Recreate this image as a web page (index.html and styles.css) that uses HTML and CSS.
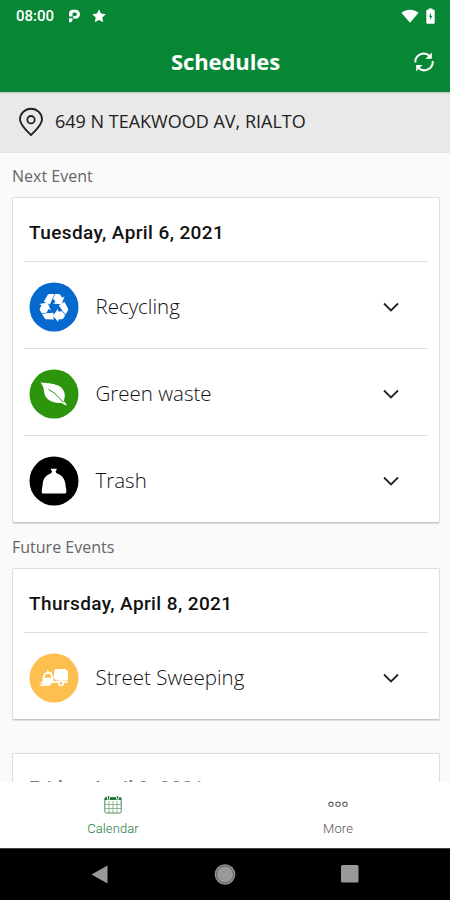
FILE: index.html
```html
<!DOCTYPE html>
<html lang="en">
<head>
<meta charset="utf-8">
<title>Schedules</title>
<link rel="stylesheet" href="styles.css">
</head>
<body>
<svg class="defs" width="0" height="0">
  <symbol id="chevron" viewBox="0 0 18 12"><path d="M2 2.500l7 7 7-7" fill="none" stroke="#222" stroke-width="1.8"/></symbol>
</svg>
<div class="app">
  <header class="top">
    <div class="status">
      <span class="clock">08:00</span>
      <svg class="parking" width="13" height="14" viewBox="0 0 13 14"><path d="M1 13.300V9.200H4.500V11.500L3 13.300zM1 7.500V4.500Q1 .7 5 .7H7.500A4.500 4.500 0 0 1 7.500 9.700H5.200V7H7.200A1.700 1.700 0 0 0 7.200 3.600H6Q4.500 3.600 4.500 5V7.500z" fill="#fff"/></svg>
      <svg class="star" width="14" height="14" viewBox="0 0 14 14"><path d="M7 .3l2 4.300 4.800.6-3.500 3.300.9 4.800L7 11l-4.200 2.300.9-4.800L.2 5.200 5 4.600z" fill="#fff"/></svg>
      <svg class="wifi" width="18" height="14" viewBox="0 0 18 14"><path d="M.4 3.700C5.500-.3 12.500-.3 17.600 3.700L9 13.700z" fill="#fff"/></svg>
      <svg class="battery" width="9" height="16" viewBox="0 0 9 16"><path d="M2.500 1.700V.5h4v1.200h1.200q1 0 1 1v12q0 1-1 1H1.300q-1 0-1-1v-12q0-1 1-1z" fill="#fff"/><path d="M5 4.500L3 9h1.300v3.200L6.200 8H5z" fill="#078636"/></svg>
    </div>
    <div class="titlebar">
      <h1>Schedules</h1>
      <svg class="refresh" width="22" height="22" viewBox="0 0 22 22"><g fill="none" stroke="#fff" stroke-width="2"><path d="M2.300 11.500A8.500 8.500 0 0 1 16.500 4.800"/><path d="M19.700 10A8.500 8.500 0 0 1 5.500 17"/></g><path d="M18.800 1.500v6.300h-6.300zM3.200 20.300V14h6.300z" fill="#fff"/></svg>
    </div>
  </header>
  <div class="address">
    <svg width="26" height="30" viewBox="0 0 26 30"><path d="M13 28C9.500 24.500 2 18 2 12.500a11 10.800 0 0 1 22 0C24 18 16.500 24.500 13 28z" fill="none" stroke="#222" stroke-width="1.900"/><circle cx="13" cy="12.700" r="3.700" fill="none" stroke="#222" stroke-width="1.800"/></svg>
    <span>649 N TEAKWOOD AV, RIALTO</span>
  </div>
  <main class="content">
    <h2 class="next">Next Event</h2>
    <section class="card">
      <h3>Tuesday, April 6, 2021</h3>
      <div class="row">
        <svg class="badge" viewBox="-25 -25 50 50"><circle r="24.500" fill="#0569cd"/>
          <g fill="#fff" transform="translate(0 .5) scale(.97)">
            <g id="arm"><path d="M-10.500-6.300L-6.200-13.300Q-5.700-14-4.500-14H.6L-4.300-3.200z"/><path d="M1.300-14H4.700Q6-14 6.600-13L8.400-10 10.800-11.300 7.800-3.300-1-4.200 1.500-5.800-1-9.300z"/></g>
            <use href="#arm" transform="rotate(120)"/><use href="#arm" transform="rotate(240)"/>
          </g></svg>
        <span>Recycling</span><svg class="chev"><use href="#chevron"/></svg>
      </div>
      <div class="row">
        <svg class="badge" viewBox="-25 -25 50 50"><circle r="24.500" fill="#2c950d"/><path d="M-13.500-11.500C-4-10.500 8-11 10.500-1C11.200 2 10.500 5 9.700 7L12.800 10.500 12 11.500 7.500 9C-2 9.500-9.500 5.500-10-3C-10.200-6.500-11.500-9-13.500-11.500z" fill="#fff"/><path d="M-5.500-4.500C1-1.500 5 3.500 9.500 8.500" fill="none" stroke="#2c950d"/></svg>
        <span>Green waste</span><svg class="chev"><use href="#chevron"/></svg>
      </div>
      <div class="row">
        <svg class="badge" viewBox="-25 -25 50 50"><circle r="24.500" fill="#000"/><path d="M-3.500-12.300H3L1.600-9.500 2.500-7.700C8-6 11-2 11.500 4C11.500 6 12.800 9 12.300 11.500Q12 12.500 11 12.500H-11Q-12.300 12.500-12.300 11C-12.300 8-11.500 6-11.300 3C-11-2-8-6-2.800-7.700L-2-9.500z" fill="#fff"/></svg>
        <span>Trash</span><svg class="chev"><use href="#chevron"/></svg>
      </div>
    </section>
    <h2 class="future">Future Events</h2>
    <section class="card">
      <h3>Thursday, April 8, 2021</h3>
      <div class="row">
        <svg class="badge" viewBox="-25 -25 50 50"><circle r="24.500" fill="#fdc04f"/><g fill="#fff"><path d="M0-7.500L1.500-9H11.500L14-6.500V2.500H2L0 0z"/><path d="M-11.500 4.500V-1L-9.500-5.300H-7.500L-6.200-8.500-4.900-5.800H-2.500L-.5-1V3.300H13.500V5H-2.500V6.500H-11.500z"/><path d="M-13.500 4H-3V5.500H-13.500zM-14.500 6.500H-4V8H-14.500z"/></g><path d="M-9.500-.3L-8-4H-4L-2.500-.3z" fill="#fdc04f"/><circle cx="7" cy="5.300" r="2.300" fill="#fdc04f" stroke="#fff" stroke-width="1.500"/></svg>
        <span>Street Sweeping</span><svg class="chev"><use href="#chevron"/></svg>
      </div>
    </section>
    <section class="card last">
      <h3>Friday, April 9, 2021</h3>
    </section>
  </main>
  <nav class="tabs">
    <div class="tab active">
      <svg width="18" height="19" viewBox="0 0 18 19"><rect x=".8" y="2.500" width="16.400" height="15.500" rx="1.500" fill="none" stroke="#4c8d59"/><path d="M.8 2.500h16.400V5H.8z" fill="#2a783c"/><path d="M1 9.500h16M1 13.500h16M5 6v12M9 6v12M13 6v12" stroke="#76a77f" stroke-width=".8"/><path d="M4.500.5v4M13.500.5v4" stroke="#fff" stroke-width="3"/><path d="M4.500 1v3M13.500 1v3" stroke="#2a783c" stroke-width="1.400"/></svg>
      <span>Calendar</span>
    </div>
    <div class="tab">
      <svg width="22" height="19" viewBox="0 0 22 19"><g fill="none" stroke="#666" stroke-width="1.100"><circle cx="4" cy="9.300" r="2.200"/><circle cx="11" cy="9.300" r="2.200"/><circle cx="18" cy="9.300" r="2.200"/></g></svg>
      <span>More</span>
    </div>
  </nav>
  <footer class="system">
    <svg width="18" height="20" viewBox="0 0 18 20"><path d="M.5 9.500L16.500.5V18.500z" fill="#999"/></svg>
    <svg width="22" height="22" viewBox="0 0 22 22"><circle cx="11" cy="10.500" r="10.300" fill="#999"/><circle cx="11" cy="10.500" r="8.500" fill="none" stroke="#555" stroke-width=".9"/></svg>
    <svg class="square" width="18" height="18" viewBox="0 0 18 18"><rect width="17.500" height="17.500" rx="1.500" fill="#999"/></svg>
  </footer>
</div>
</body>
</html>
```
FILE: styles.css
```css
* { box-sizing: border-box; }
body { margin: 0; font-family: "Open Sans", sans-serif; }
h1, h2, h3 { margin: 0; }
.defs { display: none; }
.app { width: 450px; height: 900px; display: flex; flex-direction: column; overflow: hidden; background: #fafafa; }
.top { height: 92px; flex: none; background: #078636; color: #fff; }
.status { height: 32px; display: flex; align-items: center; padding: 0 15px 0 16px; }
.clock { font: 500 15px/32px Roboto, sans-serif; width: 52px; }
.star { margin-left: 11px; }
.wifi { margin-left: auto; margin-right: 7px; }
.titlebar { height: 60px; display: grid; grid-template-columns: 40px 1fr 40px; align-items: center; padding: 0 5px; }
.titlebar h1 { grid-column: 2; font-size: 22px; line-height: 30px; font-weight: 700; text-align: center; letter-spacing: -.1px; padding: 0 0 2px 1px; }
.refresh { margin-left: 8px; }
.address { height: 61px; flex: none; background: #e9e9e9; border-bottom: 1px solid #e5e5e5; box-shadow: inset 0 2px 2px -1px #bbb; display: flex; align-items: center; padding: 0 18px; gap: 11px; color: #222; font-size: 18px; }
.address span { padding-bottom: 2px; }
.content { flex: 1; min-height: 0; overflow: hidden; padding: 0 10px 0 12px; }
h2 { font-size: 16px; font-weight: 400; color: #666; }
.next { height: 44px; line-height: 46px; }
.future { height: 45px; line-height: 48px; }
.card { background: #fff; border: 1px solid #dedede; border-bottom-color: #c6c6c6; border-radius: 2px; padding: 0 11px; box-shadow: 0 1px 1px #ddd; }
.card h3 { height: 63px; padding-left: 5px; font: 500 19px/69px Roboto, sans-serif; letter-spacing: .4px; color: #111; }
.row { height: 87px; border-top: 1px solid #dedede; display: flex; align-items: center; padding: 3px 26px 0 5px; font-size: 20.5px; font-weight: 300; color: #111; }
.row span { padding-bottom: 1px; }
.badge { width: 50px; height: 50px; margin: 0 17px 0 -.5px; }
.chev { width: 18px; height: 12px; margin-left: auto; margin-right: 2px; }
.last { margin-top: 33px; }
.card.last h3 { color: #777; line-height: 68px; }
.tabs { height: 66px; flex: none; background: #fff; display: grid; grid-template-columns: 1fr 1fr; }
.tab { display: flex; flex-direction: column; align-items: center; padding-top: 13px; font: 300 13px/18px Roboto, sans-serif; color: #555; padding-left: 1px; }
.tab span { margin-top: 6px; letter-spacing: .1px; }
.active { color: #237d40; }
.system { height: 52px; flex: none; background: #000; border-top: 1px solid #444; display: grid; grid-template-columns: 199px 52px 199px; justify-items: center; align-items: center; }
.square { margin-right: 2px; margin-bottom: 1px; }
```
